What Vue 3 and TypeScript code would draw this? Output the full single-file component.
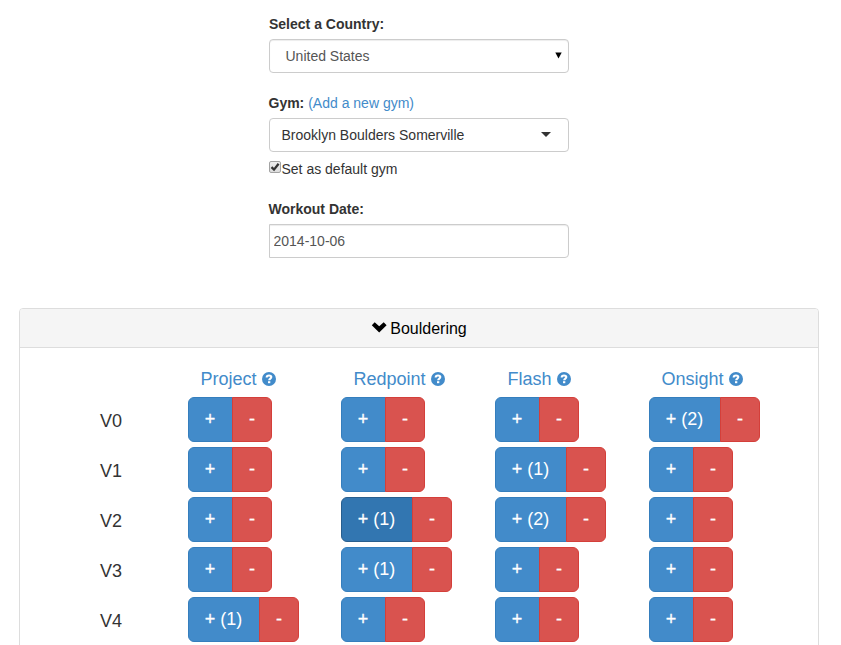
<script setup lang="ts">
import { ref } from 'vue'

interface GradeRow {
  grade: string
  counts: number[]
}

const country = ref('United States')
const gym = ref('Brooklyn Boulders Somerville')
const isDefault = ref(true)
const workoutDate = ref('2014-10-06')
const styles = ['Project', 'Redpoint', 'Flash', 'Onsight']
const active = ref('V2-1')

const rows = ref<GradeRow[]>([
  { grade: 'V0', counts: [0, 0, 0, 2] },
  { grade: 'V1', counts: [0, 0, 1, 0] },
  { grade: 'V2', counts: [0, 1, 2, 0] },
  { grade: 'V3', counts: [0, 1, 0, 0] },
  { grade: 'V4', counts: [1, 0, 0, 0] },
])

function change(row: GradeRow, index: number, delta: number) {
  row.counts[index] = Math.max(0, row.counts[index] + delta)
  if (delta > 0) active.value = `${row.grade}-${index}`
}
</script>

<template>
  <main class="page">
    <form class="form" @submit.prevent>
      <div class="label">Select a Country:</div>
      <div class="control country">
        <span>{{ country }}</span>
        <svg class="arrow" width="7" height="7" viewBox="0 0 7 7"><path d="M.3 .5h6.4L3.5 6.5z" fill="#000" /></svg>
      </div>
      <div class="label gym-label">Gym: <a class="link">(Add a new gym)</a></div>
      <div class="control gym">
        <span>{{ gym }}</span>
        <svg class="caret" width="10" height="5" viewBox="0 0 10 5"><path d="M0 0h10L5 5z" fill="#333" /></svg>
      </div>
      <div class="check" @click="isDefault = !isDefault">
        <span class="box">
          <svg v-if="isDefault" width="10" height="10" viewBox="0 0 10 10"><path d="M1.5 5.2 4 7.6 8.6 1.8" fill="none" stroke="#333" stroke-width="2.3" /></svg>
        </span>
        <span>Set as default gym</span>
      </div>
      <div class="label date-label">Workout Date:</div>
      <input v-model="workoutDate" class="control date" type="text" />
    </form>

    <section class="panel">
      <header class="heading">
        <svg width="16" height="11" viewBox="0 0 16 11"><path d="M.8 3.2 3.7.3 8.2 4.3 12.7.3l2.9 2.9-7.4 7.3z" fill="#000" /></svg>
        <span>Bouldering</span>
      </header>
      <div class="grid">
        <div class="row titles">
          <span></span>
          <div v-for="s in styles" :key="s" class="title">
            <span>{{ s }}</span>
            <svg width="14" height="14" viewBox="0 0 14 14">
              <circle cx="7" cy="7" r="7" fill="#428bca" />
              <path d="M4.7 5.6V5.2C4.7 3.9 5.6 3.5 7 3.5S9.3 4 9.3 5.1C9.3 6.6 7.2 6.5 7.2 8.3" fill="none" stroke="#fff" stroke-width="2.1" />
              <path d="M6 9.2h2.3v2H6z" fill="#fff" />
            </svg>
          </div>
        </div>
        <div v-for="row in rows" :key="row.grade" class="row">
          <span class="grade">{{ row.grade }}</span>
          <div v-for="(count, i) in row.counts" :key="i" class="group">
            <button class="btn plus" :class="{ counted: count > 0, active: active === `${row.grade}-${i}` }" @click="change(row, i, 1)"><span class="sign">+</span>{{ count ? ` (${count})` : '' }}</button>
            <button class="btn minus" @click="change(row, i, -1)"><span class="sign">-</span></button>
          </div>
        </div>
      </div>
    </section>
  </main>
</template>

<style>
body {
  overflow: hidden;
  background: #fff;
}
</style>

<style scoped>
* {
  box-sizing: border-box;
}
.page {
  height: 645px;
  overflow: hidden;
  padding: 14px 22px 0 19px;
  font: 14px/20px "Liberation Sans", Arial, sans-serif;
  color: #333;
}
.form {
  width: 300px;
  height: 294px;
  margin-left: 250px;
}
.label {
  height: 20px;
  margin-bottom: 5px;
  font-weight: 700;
}
.gym-label,
.date-label {
  margin-left: -0.5px;
}
.gym-label {
  margin-top: 20px;
}
.link {
  font-weight: 400;
  color: #428bca;
}
.control {
  display: flex;
  align-items: center;
  justify-content: space-between;
  width: 300px;
  height: 34px;
  border: 1px solid #ccc;
  border-radius: 4px;
  background: #fff;
  font: inherit;
}
.country {
  padding: 0 6px 0 15.5px;
  color: #555;
  box-shadow: inset 0 1px 1px rgba(0, 0, 0, 0.075);
}
.arrow {
  margin-top: -1px;
}
.gym {
  padding: 0 17px 0 11.5px;
}
.caret {
  margin-top: -2px;
}
.check {
  display: flex;
  height: 20px;
  margin-top: 7px;
}
.box {
  display: flex;
  align-items: center;
  justify-content: center;
  width: 12px;
  height: 12px;
  margin: 2px 0.5px 0 0;
  border: 1px solid #a3a3a3;
  border-radius: 2px;
  background: linear-gradient(#eee, #ddd);
}
.date-label {
  margin-top: 20px;
}
.date {
  display: block;
  padding: 0 3.5px;
  border-radius: 0 4px 4px 0;
  color: #555;
  outline: none;
  box-shadow: inset 0 1px 1px rgba(0, 0, 0, 0.075);
}
.panel {
  height: 400px;
  border: 1px solid #ddd;
  border-radius: 4px;
}
.heading {
  display: flex;
  justify-content: center;
  gap: 3.5px;
  height: 39px;
  padding: 10px 0.5px 0 0;
  border-bottom: 1px solid #ddd;
  border-radius: 3px 3px 0 0;
  background: #f5f5f5;
  font-size: 16px;
  line-height: 20px;
  color: #000;
}
.heading svg {
  margin-top: 3px;
}
.grid {
  padding: 19px 0 0 80px;
}
.row {
  display: grid;
  grid-template-columns: 88px 153px 154px 154px 154px;
  height: 45px;
  margin-bottom: 5px;
  font-size: 18px;
  line-height: 24px;
}
.titles {
  height: 25px;
}
.title {
  display: flex;
  gap: 5px;
  padding-left: 12.5px;
  color: #428bca;
}
.title svg {
  margin-top: 5px;
}
.grade {
  padding-top: 12px;
}
.group {
  display: flex;
  align-items: flex-start;
}
.btn {
  height: 45px;
  padding: 0 0 1px;
  border: 1px solid;
  font: 18px/24px "Liberation Sans", Arial, sans-serif;
  color: #fff;
  white-space: pre;
}
.sign {
  -webkit-text-stroke: 0.3px #fff;
}
.plus {
  width: 45px;
  padding-left: 15.7px;
  text-align: left;
  border-color: #357ebd;
  border-radius: 6px 0 0 6px;
  background: #428bca;
}
.plus.counted {
  width: 72px;
}
.plus.active {
  border-color: #285e8e;
  background: #3276b1;
}
.minus {
  width: 40px;
  margin-left: -1px;
  border-color: #d43f3a;
  border-radius: 0 6px 6px 0;
  background: #d9534f;
}
</style>
